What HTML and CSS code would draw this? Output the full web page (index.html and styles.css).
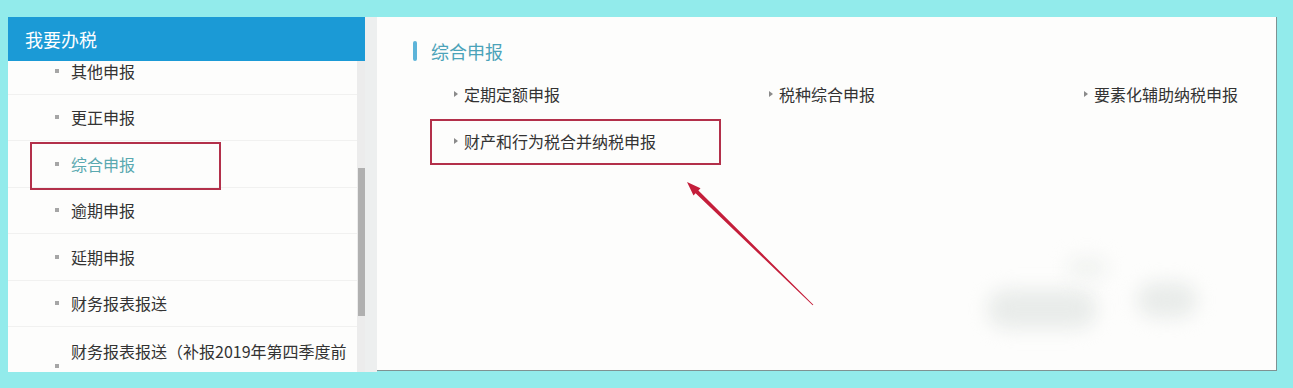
FILE: index.html
```html
<!DOCTYPE html>
<html lang="zh-CN">
<head>
<meta charset="utf-8">
<title>我要办税</title>
<link rel="stylesheet" href="styles.css">
</head>
<body>
<div class="page">
  <aside class="sidebar">
    <div class="sidebar-header">我要办税</div>
    <div class="sidebar-body">
      <div class="menu">
        <ul class="menu-list">
          <li class="menu-item"><span class="dot"></span><span>其他申报</span></li>
          <li class="menu-item"><span class="dot"></span><span>更正申报</span></li>
          <li class="menu-item active"><span class="dot"></span><span>综合申报</span></li>
          <li class="menu-item"><span class="dot"></span><span>逾期申报</span></li>
          <li class="menu-item"><span class="dot"></span><span>延期申报</span></li>
          <li class="menu-item"><span class="dot"></span><span>财务报表报送</span></li>
          <li class="menu-item tall"><span class="dot"></span><span class="wrap">财务报表报送（补报2019年第四季度前财务报表）</span></li>
        </ul>
      </div>
      <div class="scrollbar"><div class="thumb"></div></div>
    </div>
  </aside>
  <div class="gap"></div>
  <main class="content">
    <div class="title"><span class="title-bar"></span><span>综合申报</span></div>
    <div class="links">
      <div class="link"><span class="tri"></span><span>定期定额申报</span></div>
      <div class="link"><span class="tri"></span><span>税种综合申报</span></div>
      <div class="link"><span class="tri"></span><span>要素化辅助纳税申报</span></div>
      <div class="link"><span class="tri"></span><span>财产和行为税合并纳税申报</span></div>
    </div>
    <div class="watermark"><span class="blob b1"></span><span class="blob b2"></span><span class="blob b3"></span></div>
  </main>
</div>
<svg class="annot" width="1293" height="388" viewBox="0 0 1293 388" xmlns="http://www.w3.org/2000/svg">
  <rect x="31" y="143" width="189" height="46" fill="none" stroke="#b3304a" stroke-width="2"/>
  <rect x="431" y="120" width="289" height="44" fill="none" stroke="#b3304a" stroke-width="2"/>
  <polygon points="687,182 700.5,188.2 698.4,190.4 813.35,304.64 812.65,305.36 695.6,193.2 693.5,195.4" fill="#c41e3a"/>
</svg>
</body>
</html>
```

FILE: styles.css
```css
* { box-sizing: border-box; }
html, body { margin: 0; padding: 0; }
body {
  width: 1293px;
  height: 388px;
  overflow: hidden;
  background: #92ebeb;
  font-family: "Noto Sans CJK SC", "Noto Sans", sans-serif;
  position: relative;
}
.page {
  display: flex;
  align-items: flex-start;
  padding: 17px 0 0 8px;
}
.sidebar {
  width: 357px;
  height: 355px;
  background: #fdfdfc;
  display: flex;
  flex-direction: column;
}
.sidebar-header {
  height: 44px;
  flex: none;
  background: #1b9ad6;
  color: #fff;
  font-size: 18px;
  display: flex;
  align-items: center;
  padding-left: 17px;
}
.sidebar-body {
  flex: 1;
  display: flex;
  overflow: hidden;
}
.menu {
  flex: 1;
  overflow: hidden;
}
.menu-list {
  list-style: none;
  margin: -13px 0 0 0;
  padding: 0;
}
.menu-item {
  display: flex;
  align-items: center;
  height: 46.5px;
  border-bottom: 1px solid #f1f1f0;
  padding-left: 47px;
  font-size: 16px;
  color: #333;
}
.menu-item.active { color: #5aa9b0; }
.menu-item.tall {
  height: auto;
  padding-top: 9px;
  padding-bottom: 9px;
  align-items: center;
  line-height: 30px;
  border-bottom: none;
}
.wrap { width: 286px; }
.dot {
  width: 4px;
  height: 4px;
  background: #a6a6a6;
  margin-right: 12px;
  flex: none;
}
.scrollbar {
  width: 8px;
  flex: none;
  background: #ececec;
}
.thumb {
  margin-top: 107px;
  margin-left: 1px;
  width: 7px;
  height: 148px;
  background: #b0b0b0;
}
.gap {
  width: 12px;
  height: 355px;
  background: #edefef;
}
.content {
  position: relative;
  width: 900px;
  height: 354px;
  background: #fdfdfc;
  border-right: 1px solid #7f9292;
  border-bottom: 1px solid #7f9292;
  padding: 22px 0 0 36px;
}
.title {
  display: flex;
  align-items: center;
  height: 24px;
  font-size: 18px;
  color: #4ba3b9;
}
.title-bar {
  width: 4px;
  height: 20px;
  border-radius: 2px;
  background: #5db4d9;
  margin-right: 14px;
}
.links {
  display: grid;
  grid-template-columns: repeat(3, 315px);
  grid-auto-rows: 47px;
  margin: 7px 0 0 41px;
}
.link {
  display: flex;
  align-items: center;
  font-size: 16px;
  color: #333;
}
.tri {
  width: 0;
  height: 0;
  border-left: 4px solid #8a8a8a;
  border-top: 3px solid transparent;
  border-bottom: 3px solid transparent;
  margin-right: 6px;
}
.watermark {
  position: absolute;
  left: 600px;
  top: 220px;
  width: 240px;
  height: 110px;
}
.blob {
  position: absolute;
  background: #e9ecea;
  filter: blur(9px);
  border-radius: 20px;
}
.b1 { left: 10px; top: 52px; width: 110px; height: 40px; }
.b2 { left: 160px; top: 45px; width: 60px; height: 36px; }
.b3 { left: 90px; top: 20px; width: 40px; height: 22px; background: #f1f3f1; }
.annot {
  position: absolute;
  left: 0;
  top: 0;
  pointer-events: none;
}
```
